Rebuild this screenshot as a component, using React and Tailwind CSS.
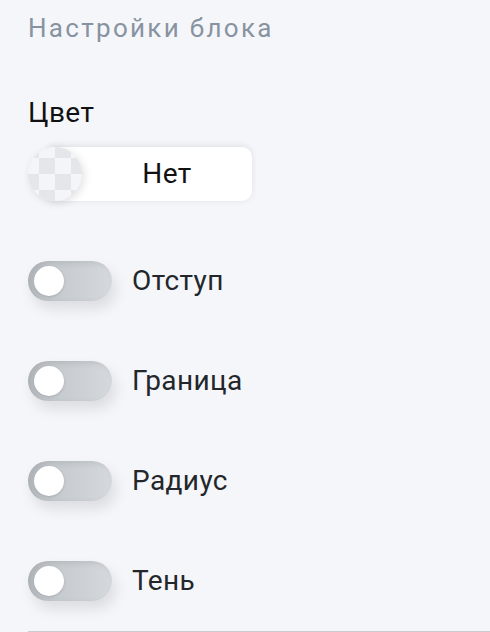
import React from "react";

const Toggle = ({ label }) => (
  <div className="flex items-center h-[100px]">
    <div className="relative w-[84px] h-[40px] rounded-full bg-gradient-to-r from-[#bec3c8] to-[#d5d9de] shadow-[inset_4px_2px_6px_rgba(0,0,0,0.1),4px_8px_14px_rgba(0,0,0,0.1)]">
      <div className="absolute left-[6px] top-[5px] w-[30px] h-[30px] rounded-full bg-white shadow-[0_1px_3px_rgba(0,0,0,0.15)]" />
    </div>
    <span className="ml-5 text-[28px] leading-[32px] tracking-[0.4px] text-[#23262b]">{label}</span>
  </div>
);

export default function App() {
  return (
    <div
      className="w-[490px] h-[632px] bg-[#f5f6fa] flex flex-col pl-7 overflow-hidden"
      style={{ fontFamily: "Roboto, 'Noto Sans', sans-serif" }}
    >
      <h2 className="mt-[12px] text-[26px] leading-[32px] tracking-[2.3px] text-[#8793a0]">
        Настройки блока
      </h2>

      <div className="mt-[53px] text-[28px] leading-[32px] tracking-[0.4px] text-[#111]">Цвет</div>

      <div className="mt-[18px] relative flex items-center w-[224px] h-[54px]">
        <div className="absolute left-[20px] right-0 top-0 bottom-0 rounded-r-[10px] rounded-l-[4px] bg-white shadow-[0_-3px_6px_rgba(0,0,0,0.06),0_2px_6px_rgba(0,0,0,0.04)]" />
        <div className="relative w-[54px] h-[54px] rounded-full overflow-hidden shadow-[2px_2px_8px_rgba(0,0,0,0.12)] bg-[#f4f5f9]">
          <svg width="54" height="54" viewBox="0 0 54 54">
            {[0, 1, 2, 3].map((r) =>
              [0, 1, 2, 3].map((c) =>
                (r + c) % 2 === 0 ? (
                  <rect key={`${r}-${c}`} x={c * 16 - 5} y={r * 16 - 5} width="16" height="16" fill="#e5e6ea" />
                ) : null
              )
            )}
          </svg>
        </div>
        <span className="relative flex-1 text-center text-[28px] tracking-[0.4px] text-[#111]">Нет</span>
      </div>

      <div className="mt-[30px] flex flex-col">
        <Toggle label="Отступ" />
        <Toggle label="Граница" />
        <Toggle label="Радиус" />
        <Toggle label="Тень" />
      </div>

      <div className="mt-auto h-px bg-[#c9cdd3]" />
    </div>
  );
}
